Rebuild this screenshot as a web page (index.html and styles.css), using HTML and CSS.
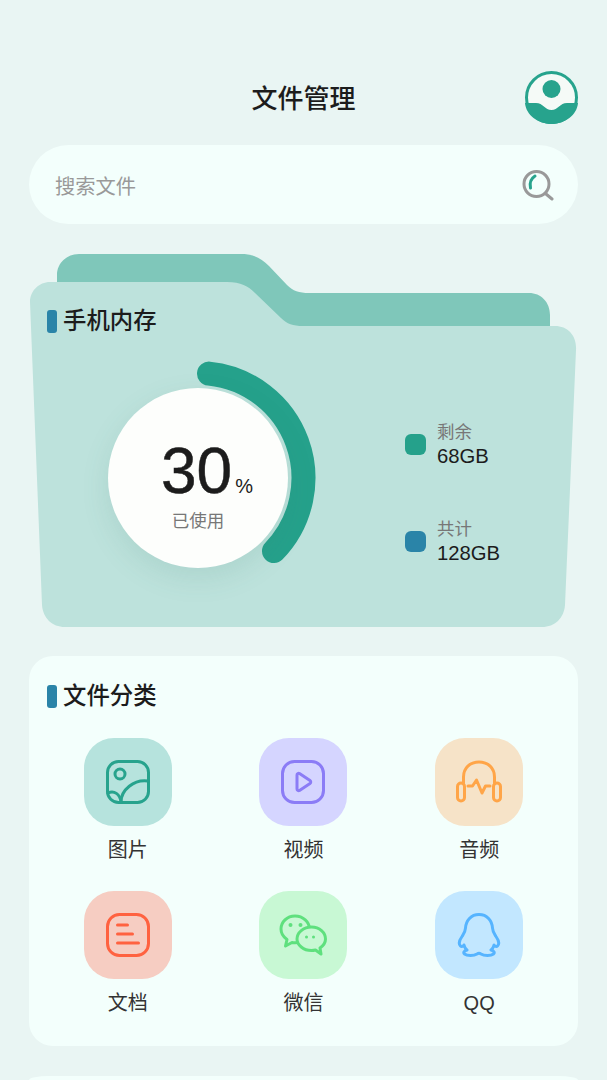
FILE: index.html
```html
<!DOCTYPE html>
<html lang="zh-CN">

<head>
    <meta charset="UTF-8">
    <meta name="viewport" content="width=device-width, initial-scale=1.0">
    <link rel="stylesheet" href="styles.css">
    <title>文件管理</title>
</head>

<body>

    <header class="top">
        <span></span>
        <h1 class="page-title">文件管理</h1>
        <svg class="avatar" viewBox="0 0 53 53">
            <circle class="avatar-bg" cx="26.5" cy="26.5" r="25"/>
            <circle class="teal" cx="26.5" cy="18" r="9"/>
            <path class="teal" d="M0 32 L11 32 C18 32 20 39 26.5 39 C33 39 35 32 42 32 L53 32 C52 44 40 53 26.5 53 C13 53 1 44 0 32Z"/>
        </svg>
    </header>

    <div class="search">
        <span class="search-text">搜索文件</span>
        <svg class="search-icon" viewBox="0 0 32 32">
            <circle class="search-ring" cx="14.5" cy="15" r="12.5"/>
            <path class="search-ring" d="M24 25 L30 30"/>
            <path class="search-arc" d="M8.5 19 C7.500 14 9 9.500 13 7"/>
        </svg>
    </div>

    <section class="folder">
        <svg class="folder-bg" viewBox="0 0 549 375">
            <path class="folder-back" d="M28 22 C28 10 38 1 50 1 L212 1 C224 1 232 5 240 13 L258 32 C264 38 270 40 280 40 L500 40 C512 40 521 49 521 62 L521 100 L28 100Z"/>
            <path class="folder-front" d="M1 49 C1 38 10 29 21 29 L198 29 C212 29 219 33 226 40 L252 65 C258 71 264 73 274 73 L526 73 C539 73 548 83 547 97 L536 352 C535 365 526 374 513 374 L36 374 C23 374 14 365 13 352Z"/>
        </svg>

        <h2 class="section-title">手机内存</h2>

        <div class="storage">
            <div class="gauge">
                <svg class="gauge-arc" viewBox="0 0 234 234">
                    <path class="arc" d="M128 12.6 A105 105 0 0 1 193 190"/>
                </svg>
                <div class="gauge-circle">
                    <div class="gauge-num">30<span class="gauge-unit">%</span></div>
                    <div class="gauge-label">已使用</div>
                </div>
            </div>

            <div class="legend">
                <div class="legend-item">
                    <span class="dot dot-green"></span>
                    <div>
                        <div class="legend-label">剩余</div>
                        <div class="legend-value">68GB</div>
                    </div>
                </div>
                <div class="legend-item">
                    <span class="dot dot-blue"></span>
                    <div>
                        <div class="legend-label">共计</div>
                        <div class="legend-value">128GB</div>
                    </div>
                </div>
            </div>
        </div>
    </section>

    <section class="card">
        <h2 class="section-title">文件分类</h2>

        <div class="types">
            <div class="type">
                <div class="tile tile-image">
                    <svg class="icon" viewBox="0 0 44 44">
                        <rect x="1.5" y="1.5" width="41" height="41" rx="11"/>
                        <circle cx="14" cy="14" r="5"/>
                        <path d="M15 42 C15 30 28 19 42 21"/>
                        <path d="M2 33 C8 30 14 34 15 42"/>
                    </svg>
                </div>
                <span class="type-name">图片</span>
            </div>
            <div class="type">
                <div class="tile tile-video">
                    <svg class="icon" viewBox="0 0 44 44">
                        <rect x="1.5" y="1.5" width="41" height="41" rx="12"/>
                        <path d="M16 15 C16 13.500 17.500 13 18.500 13.600 L29 20.500 C30 21.200 30 22.800 29 23.500 L18.500 30.400 C17.500 31 16 30.500 16 29Z"/>
                    </svg>
                </div>
                <span class="type-name">视频</span>
            </div>
            <div class="type">
                <div class="tile tile-audio">
                    <svg class="icon" viewBox="0 0 46 44">
                        <rect x="1.5" y="23" width="7" height="18" rx="3.5"/>
                        <rect x="37.5" y="23" width="7" height="18" rx="3.5"/>
                        <path d="M7.500 23 L7.500 17 C7.500 8 14 2 23 2 C32 2 38.500 8 38.500 17 L38.500 23"/>
                        <path d="M12 26 L16.500 26 L20.500 20 L26 33 L29.500 26 L34 26"/>
                    </svg>
                </div>
                <span class="type-name">音频</span>
            </div>
            <div class="type">
                <div class="tile tile-doc">
                    <svg class="icon" viewBox="0 0 44 44">
                        <rect x="1.5" y="1.5" width="41" height="41" rx="12"/>
                        <path d="M11.500 12 L21.500 12 M11.500 21 L26.500 21 M11.500 30 L32.500 30"/>
                    </svg>
                </div>
                <span class="type-name">文档</span>
            </div>
            <div class="type">
                <div class="tile tile-wechat">
                    <svg class="icon icon-wide" viewBox="0 0 48 42">
                        <path d="M16 2 C8 2 2 8 2 15 C2 19.500 4.500 23 8 25.500 L6.500 32 L13 28.500 C14 28.700 15 28.800 16 28.800 C24 28.800 30.500 22.500 30.500 15 C30.500 8 24 2 16 2Z"/>
                        <path class="bubble" d="M32.500 13 C24.500 13 18 18.500 18 25 C18 31 24.500 36.500 32.500 36.500 C34 36.500 35.300 36.300 36.500 36 L42 40 L41 34 C44.300 31.700 46.500 28.500 46.500 25 C46.500 18.500 40.500 13 32.500 13Z"/>
                        <circle class="eye" cx="11.500" cy="11" r="2"/>
                        <circle class="eye" cx="21.500" cy="11" r="2"/>
                        <circle class="eye" cx="27.500" cy="23" r="1.500"/>
                        <circle class="eye" cx="34.500" cy="23" r="1.500"/>
                    </svg>
                </div>
                <span class="type-name">微信</span>
            </div>
            <div class="type">
                <div class="tile tile-qq">
                    <svg class="icon" viewBox="0 0 44 44">
                        <path d="M22 1.500 C30 1.500 35 7.500 35.500 15 C35.700 19 37 20.500 39 23.500 C41.500 27 42.500 31 40.500 33 C39.500 34 38 33.500 37 32 C36.500 34 35.500 36 34 37 C37 38 38 39.500 36.500 41 C34 43 27 43 24 41 C23 40.300 21 40.300 20 41 C17 43 10 43 7.500 41 C6 39.500 7 38 10 37 C8.500 36 7.500 34 7 32 C6 33.500 4.500 34 3.500 33 C1.500 31 2.500 27 5 23.500 C7 20.500 8.300 19 8.500 15 C9 7.500 14 1.500 22 1.500Z"/>
                    </svg>
                </div>
                <span class="type-name">QQ</span>
            </div>
        </div>
    </section>

    <section class="card card-next"></section>

</body>

</html>
```

FILE: styles.css
```css
html,
body {
    height: 100%;
}

body {
    margin: 0;
    padding: 71px 29px 0;
    box-sizing: border-box;
    overflow: hidden;
    background: #e9f5f3;
    color: #1c1c1c;
    font-family: "Liberation Sans", "Noto Sans CJK SC", sans-serif;
}

h1,
h2 {
    margin: 0;
    font-weight: 500;
}

/* header */
.top {
    display: grid;
    grid-template-columns: 53px 1fr 53px;
    align-items: center;
    height: 53px;
}

.page-title {
    padding-bottom: 2px;
    font-size: 26px;
    text-align: center;
}

.avatar {
    display: block;
    width: 53px;
    height: 53px;
}

.avatar-bg {
    fill: #f5faf7;
    stroke: #27a38d;
    stroke-width: 3;
}

.teal {
    fill: #27a38d;
}

/* search */
.search {
    display: flex;
    align-items: center;
    justify-content: space-between;
    height: 79px;
    margin-top: 21px;
    padding: 0 24px 0 26px;
    border-radius: 40px;
    background: #f3fffc;
}

.search-text {
    font-size: 20.3px;
    color: #999;
}

.search-icon {
    width: 32px;
    height: 32px;
    fill: none;
    stroke-linecap: round;
}

.search-ring {
    stroke: #999;
    stroke-width: 3;
}

.search-arc {
    stroke: #27a38d;
    stroke-width: 3;
}

/* folder */
.folder {
    position: relative;
    height: 375px;
    margin-top: 29px;
    padding-top: 57px;
    box-sizing: border-box;
}

.folder-bg {
    position: absolute;
    top: 0;
    left: 0;
    width: 549px;
    height: 375px;
}

.folder-back {
    fill: #7fc7ba;
}

.folder-front {
    fill: #bde2dc;
}

.section-title {
    position: relative;
    display: flex;
    align-items: center;
    gap: 6px;
    height: 23px;
    padding-left: 18px;
    font-size: 23.4px;
    line-height: 23px;
}

.section-title::before {
    content: "";
    width: 10px;
    height: 23px;
    border-radius: 3px;
    background: #2a84a8;
}

.storage {
    position: relative;
    display: flex;
    margin-top: 28px;
    padding-left: 52px;
}

.gauge {
    position: relative;
    display: flex;
    align-items: center;
    justify-content: center;
    width: 234px;
    height: 234px;
}

.gauge-arc {
    position: absolute;
    top: 0;
    left: 0;
    width: 234px;
    height: 234px;
    overflow: visible;
}

.arc {
    fill: none;
    stroke: #25a18b;
    stroke-width: 24;
    stroke-linecap: round;
}

.gauge-circle {
    position: relative;
    display: flex;
    flex-direction: column;
    align-items: center;
    width: 180px;
    height: 180px;
    padding-top: 53px;
    box-sizing: border-box;
    border-radius: 50%;
    background: #fdfefc;
    box-shadow: 0 10px 28px rgba(60, 120, 110, 0.13);
}

.gauge-num {
    padding-left: 18px;
    font-size: 64px;
    line-height: 60px;
    -webkit-text-stroke: 0.5px #1c1c1c;
}

.gauge-unit {
    margin-left: 3px;
    font-size: 20px;
    line-height: 1;
    -webkit-text-stroke: 0;
}

.gauge-label {
    margin-top: 8px;
    font-size: 17.5px;
    line-height: 24px;
    color: #777;
}

.legend {
    display: flex;
    flex-direction: column;
    gap: 49px;
    margin-left: 90px;
    padding-top: 59px;
}

.legend-item {
    display: flex;
    align-items: center;
    gap: 11px;
}

.dot {
    width: 21px;
    height: 21px;
    border-radius: 6px;
}

.dot-green {
    background: #25a18b;
}

.dot-blue {
    background: #2a84a8;
}

.legend-label {
    font-size: 17.5px;
    line-height: 24px;
    color: #777;
}

.legend-value {
    font-size: 20.3px;
    line-height: 24px;
}

/* categories */
.card {
    margin-top: 28px;
    padding-top: 29px;
    height: 390px;
    box-sizing: border-box;
    border-radius: 24px;
    background: #f3fffc;
}

.card-next {
    margin-top: 30px;
    padding: 0;
    height: 4px;
    border-radius: 20px 20px 0 0 / 4px 4px 0 0;
}

.types {
    display: grid;
    grid-template-columns: repeat(3, 1fr);
    row-gap: 27px;
    margin-top: 30px;
    padding: 0 11px;
}

.type {
    display: flex;
    flex-direction: column;
    align-items: center;
    gap: 10px;
}

.tile {
    display: flex;
    align-items: center;
    justify-content: center;
    width: 88px;
    height: 88px;
    border-radius: 30px;
}

.type-name {
    font-size: 20px;
    line-height: 28px;
    color: #333;
}

.icon {
    width: 44px;
    height: 44px;
    fill: none;
    stroke-width: 3;
    stroke-linecap: round;
    stroke-linejoin: round;
}

.icon-wide {
    width: 48px;
    height: 42px;
}

.tile-image {
    background: #b6e3dd;
}

.tile-image .icon {
    stroke: #27a38d;
}

.tile-video {
    background: #d5d5ff;
}

.tile-video .icon {
    stroke: #8b7cf6;
}

.tile-audio {
    background: #f6e3c8;
}

.tile-audio .icon {
    width: 46px;
    stroke: #ffa548;
}

.tile-doc {
    background: #f6cdc2;
}

.tile-doc .icon {
    stroke: #ff6240;
}

.tile-wechat {
    background: #c8f8d4;
}

.tile-wechat .icon {
    stroke: #5fe07e;
}

.tile-wechat .bubble {
    fill: #c8f8d4;
}

.tile-wechat .eye {
    fill: #5fe07e;
    stroke: none;
}

.tile-qq {
    background: #c2e7ff;
}

.tile-qq .icon {
    stroke: #56b4ff;
}
```
